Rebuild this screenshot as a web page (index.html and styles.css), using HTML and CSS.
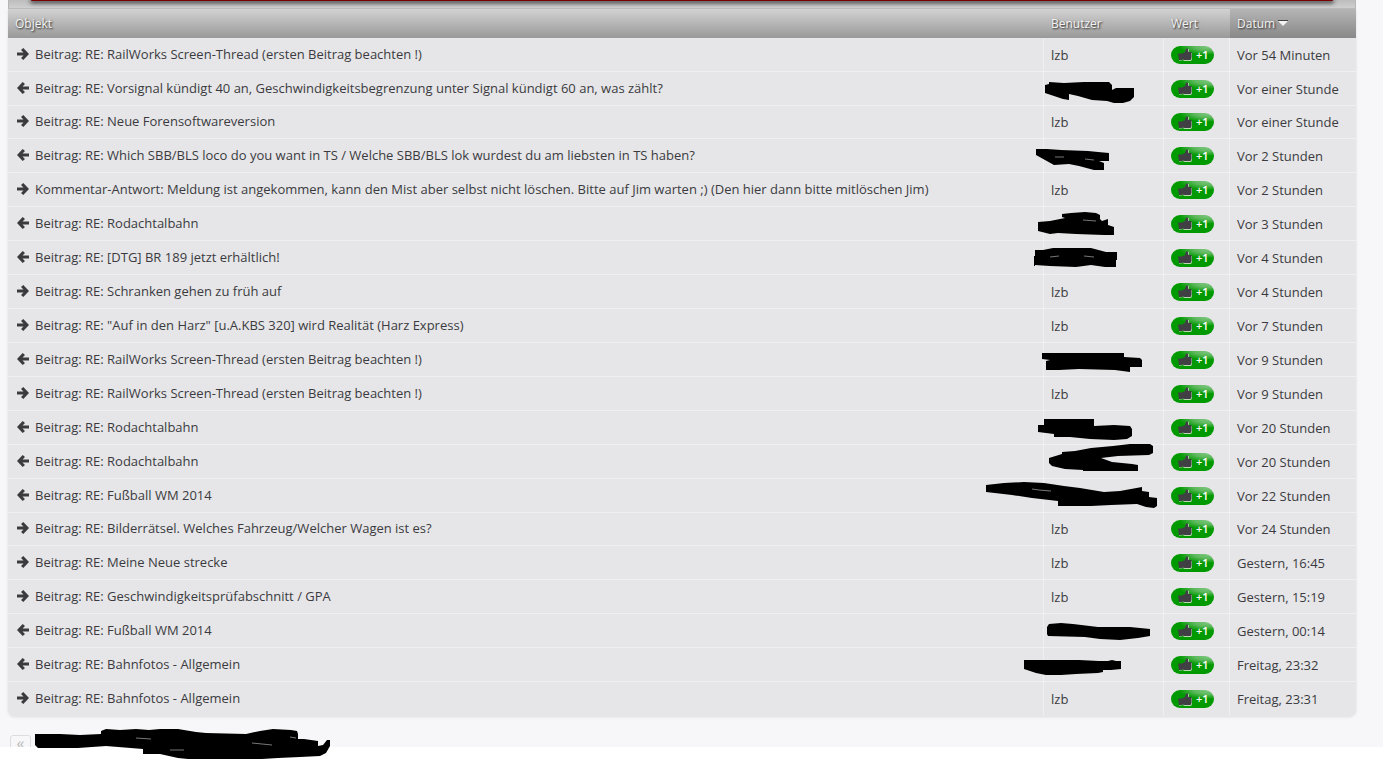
FILE: index.html
```html
<!DOCTYPE html>
<html lang="de">
<head>
<meta charset="utf-8">
<title>Bewertungen</title>
<link rel="stylesheet" href="styles.css">
</head>
<body>
<svg class="defs" aria-hidden="true">
  <symbol id="right" viewBox="0 0 12 12"><path d="M0 4.500h6.500L4 2.100 6.300 0 12 6l-5.700 6L4 9.900l2.500-2.400H0z"/></symbol>
  <symbol id="left" viewBox="0 0 12 12"><path d="M12 4.500H5.500L8 2.100 5.700 0 0 6l5.700 6L8 9.900 5.500 7.500H12z"/></symbol>
  <symbol id="thumb" viewBox="0 0 14 13"><path class="thumb-edge" d="M1 6h3v6.500H1zM5 6l3-2 1-3h2v4h3v6l-1 2H6.500L4.500 12z"/><path class="thumb-fill" d="M0 5.500h4V12H1zM4 5.500L7 4l1-3.500 2 .2.300 3.300H13.500v6l-1 2H6.500L4 11.500z"/></symbol>
</svg>
<main class="content">
  <div class="banner"><div class="banner-bar"></div></div>
  <table class="votes">
    <thead>
      <tr><th class="object"><a href="#">Objekt</a></th><th class="user"><a href="#">Benutzer</a></th><th class="value"><a href="#">Wert</a></th><th class="date sorted"><a href="#">Datum<svg class="sort" viewBox="0 0 10 6"><path class="sort-shade" d="M0 0h10v1H0z"/><path class="sort-fill" d="M0 1h10L5 6z"/></svg></a></th></tr>
    </thead>
    <tbody>
      <tr><td><svg class="arrow"><use href="#right"/></svg><a href="#">Beitrag: RE: RailWorks Screen-Thread (ersten Beitrag beachten !)</a></td><td><a href="#">lzb</a></td><td><span class="badge"><svg class="thumb"><use href="#thumb"/></svg>+1</span></td><td>Vor 54 Minuten</td></tr>
      <tr><td><svg class="arrow"><use href="#left"/></svg><a href="#">Beitrag: RE: Vorsignal kündigt 40 an, Geschwindigkeitsbegrenzung unter Signal kündigt 60 an, was zählt?</a></td><td><svg class="scribble" viewBox="1044 72 120 34"><path d="M1045 85l4-1v-2l15 1 20-1h25l3 3v5l4-2h18v9l-4 4-7 2h-9l-7-2-15-1-14-4-9-2v6l-6-1-18-6z"/></svg></td><td><span class="badge"><svg class="thumb"><use href="#thumb"/></svg>+1</span></td><td>Vor einer Stunde</td></tr>
      <tr><td><svg class="arrow"><use href="#right"/></svg><a href="#">Beitrag: RE: Neue Forensoftwareversion</a></td><td><a href="#">lzb</a></td><td><span class="badge"><svg class="thumb"><use href="#thumb"/></svg>+1</span></td><td>Vor einer Stunde</td></tr>
      <tr><td><svg class="arrow"><use href="#left"/></svg><a href="#">Beitrag: RE: Which SBB/BLS loco do you want in TS / Welche SBB/BLS lok wurdest du am liebsten in TS haben?</a></td><td><svg class="scribble" viewBox="1044 139 120 34"><path d="M1036 149h11l14 1 27 1 10 1 11 1v8h-10l5 2v7h-10l-15-4-10-2-15 1L1045 160l-9-5z"/><path class="gap" d="M1055 157h9M1085 159l9 1"/></svg></td><td><span class="badge"><svg class="thumb"><use href="#thumb"/></svg>+1</span></td><td>Vor 2 Stunden</td></tr>
      <tr><td><svg class="arrow"><use href="#right"/></svg><a href="#">Kommentar-Antwort: Meldung ist angekommen, kann den Mist aber selbst nicht löschen. Bitte auf Jim warten ;) (Den hier dann bitte mitlöschen Jim)</a></td><td><a href="#">lzb</a></td><td><span class="badge"><svg class="thumb"><use href="#thumb"/></svg>+1</span></td><td>Vor 2 Stunden</td></tr>
      <tr><td><svg class="arrow"><use href="#left"/></svg><a href="#">Beitrag: RE: Rodachtalbahn</a></td><td><svg class="scribble" viewBox="1044 207 120 34"><path d="M1038 222l12-1 15-3-3-1v-3l9-1 14-1 11 1 4 2v4l2 2 6-2v6l6 2v8h-10l-28-1-18-1-8 1-12-3z"/><path class="gap" d="M1083 220l13 1"/></svg></td><td><span class="badge"><svg class="thumb"><use href="#thumb"/></svg>+1</span></td><td>Vor 3 Stunden</td></tr>
      <tr><td><svg class="arrow"><use href="#left"/></svg><a href="#">Beitrag: RE: [DTG] BR 189 jetzt erhältlich!</a></td><td><svg class="scribble" viewBox="1044 241 120 34"><path d="M1035 250h8l10-2h38l15 4h11v8h-1v7h-11l-14-2-15 2-26-1-15-1v1h-1v-10h1z"/><path class="gap" d="M1050 257l9-1M1084 256l10 1"/></svg></td><td><span class="badge"><svg class="thumb"><use href="#thumb"/></svg>+1</span></td><td>Vor 4 Stunden</td></tr>
      <tr><td><svg class="arrow"><use href="#right"/></svg><a href="#">Beitrag: RE: Schranken gehen zu früh auf</a></td><td><a href="#">lzb</a></td><td><span class="badge"><svg class="thumb"><use href="#thumb"/></svg>+1</span></td><td>Vor 4 Stunden</td></tr>
      <tr><td><svg class="arrow"><use href="#right"/></svg><a href="#">Beitrag: RE: "Auf in den Harz" [u.A.KBS 320] wird Realität (Harz Express)</a></td><td><a href="#">lzb</a></td><td><span class="badge"><svg class="thumb"><use href="#thumb"/></svg>+1</span></td><td>Vor 7 Stunden</td></tr>
      <tr><td><svg class="arrow"><use href="#left"/></svg><a href="#">Beitrag: RE: RailWorks Screen-Thread (ersten Beitrag beachten !)</a></td><td><svg class="scribble" viewBox="1044 343 120 34"><path d="M1042 353h82v4l16 1 2 2v7h-12v5l-15-2-36-1-20 1h-13v-9l4-1-8-1z"/></svg></td><td><span class="badge"><svg class="thumb"><use href="#thumb"/></svg>+1</span></td><td>Vor 9 Stunden</td></tr>
      <tr><td><svg class="arrow"><use href="#right"/></svg><a href="#">Beitrag: RE: RailWorks Screen-Thread (ersten Beitrag beachten !)</a></td><td><a href="#">lzb</a></td><td><span class="badge"><svg class="thumb"><use href="#thumb"/></svg>+1</span></td><td>Vor 9 Stunden</td></tr>
      <tr><td><svg class="arrow"><use href="#left"/></svg><a href="#">Beitrag: RE: Rodachtalbahn</a></td><td><svg class="scribble" viewBox="1044 411 120 34"><path d="M1038 425h6v-6h50v7l20-1 16 1 2 3v7l-5 3-13 1-24-1-20-2h-16v-3l-16-2z"/></svg></td><td><span class="badge"><svg class="thumb"><use href="#thumb"/></svg>+1</span></td><td>Vor 20 Stunden</td></tr>
      <tr><td><svg class="arrow"><use href="#left"/></svg><a href="#">Beitrag: RE: Rodachtalbahn</a></td><td><svg class="scribble" viewBox="1044 445 120 34"><path d="M1049 458l13-4v-2l13-1 16-3 22-2 17-2h20l3 2v7l-4 2-31 1-17 2 11 4 20 2 6 1v6h-55v-1l-18-1-13-3-3-3z"/></svg></td><td><span class="badge"><svg class="thumb"><use href="#thumb"/></svg>+1</span></td><td>Vor 20 Stunden</td></tr>
      <tr><td><svg class="arrow"><use href="#left"/></svg><a href="#">Beitrag: RE: Fußball WM 2014</a></td><td><svg class="scribble" viewBox="1044 479 120 34"><path d="M986 485l18-2 20-1 20 1 20 3 16 2 24 4 16-1 22-4v4l7 1v5l8 1v8l-3 2-8-1-9-3-26 1-20 1h-33v-5l-26-3-20-3-26-3z"/><path class="gap" d="M1032 489l7 1 12 1"/></svg></td><td><span class="badge"><svg class="thumb"><use href="#thumb"/></svg>+1</span></td><td>Vor 22 Stunden</td></tr>
      <tr><td><svg class="arrow"><use href="#right"/></svg><a href="#">Beitrag: RE: Bilderrätsel. Welches Fahrzeug/Welcher Wagen ist es?</a></td><td><a href="#">lzb</a></td><td><span class="badge"><svg class="thumb"><use href="#thumb"/></svg>+1</span></td><td>Vor 24 Stunden</td></tr>
      <tr><td><svg class="arrow"><use href="#right"/></svg><a href="#">Beitrag: RE: Meine Neue strecke</a></td><td><a href="#">lzb</a></td><td><span class="badge"><svg class="thumb"><use href="#thumb"/></svg>+1</span></td><td>Gestern, 16:45</td></tr>
      <tr><td><svg class="arrow"><use href="#right"/></svg><a href="#">Beitrag: RE: Geschwindigkeitsprüfabschnitt / GPA</a></td><td><a href="#">lzb</a></td><td><span class="badge"><svg class="thumb"><use href="#thumb"/></svg>+1</span></td><td>Gestern, 15:19</td></tr>
      <tr><td><svg class="arrow"><use href="#left"/></svg><a href="#">Beitrag: RE: Fußball WM 2014</a></td><td><svg class="scribble" viewBox="1044 614 120 34"><path d="M1047 627l2-3 12-1 12 1 25 3h32l20 2v7l-12 2-18 2-20-1-15-2-37-1-1-2z"/></svg></td><td><span class="badge"><svg class="thumb"><use href="#thumb"/></svg>+1</span></td><td>Gestern, 00:14</td></tr>
      <tr><td><svg class="arrow"><use href="#left"/></svg><a href="#">Beitrag: RE: Bahnfotos - Allgemein</a></td><td><svg class="scribble" viewBox="1044 648 120 34"><path d="M1024 660h55l20 1h9l4-1 4 1h5v8l-10 1h-8v2l-5 1-22 1-15 1h-15l-10-2-12-4z"/></svg></td><td><span class="badge"><svg class="thumb"><use href="#thumb"/></svg>+1</span></td><td>Freitag, 23:32</td></tr>
      <tr><td><svg class="arrow"><use href="#right"/></svg><a href="#">Beitrag: RE: Bahnfotos - Allgemein</a></td><td><a href="#">lzb</a></td><td><span class="badge"><svg class="thumb"><use href="#thumb"/></svg>+1</span></td><td>Freitag, 23:31</td></tr>
    </tbody>
  </table>
  <nav class="pager">
    <div class="pager-clip"><button class="previous" type="button" disabled>«</button></div>
    <svg class="pager-scribble" viewBox="35 729 296 30"><path d="M35 734h25l20 1 21-1v-3l5-2 14 1 16-1 13 1 11-1h18l18 3 10 1 40 1 14-3 13-2 18 1 6 1 1 3v5h6l14 2v5l5-1 4-5h3v6l-4 7-6 3-20 1-22 1-32 2h-48l-20-2-18-4h-17v-5l-37-3-28 2H38L35 745z"/><path class="gap" d="M136 738l15 1M170 750h14M252 743l20 2M290 737l6 1"/></svg>
  </nav>
</main>
</body>
</html>
```
FILE: styles.css
```css
* { box-sizing: border-box; }
body {
  margin: 0;
  min-height: 100vh;
  background: #fff;
  color: #3b3b3f;
  font: 13px/18px "Trebuchet MS", "Open Sans", sans-serif;
}
a { color: inherit; text-decoration: none; }
.defs { position: absolute; width: 0; height: 0; }
.content { padding: 0 27px 0 8px; background: #f7f7f9; }
.banner {
  height: 9px;
  padding: 0 22px;
  overflow: hidden;
  background: linear-gradient(#bdbdbd, #cfcfcf);
  border: 1px solid #b5b5b5;
  border-top: 0;
}
.banner-bar {
  height: 1px;
  background: #780000;
  border-radius: 0 0 4px 4px;
  box-shadow: 0 1px 4px 1px #222;
}
.votes {
  width: 100%;
  table-layout: fixed;
  border-collapse: separate;
  border-spacing: 0;
  background: #e6e6e8;
  border-radius: 0 0 7px 7px;
  box-shadow: 0 1px 3px #dcdcde;
}
.votes th {
  height: 29px;
  padding: 0 7px;
  text-align: left;
  font-size: 12px;
  font-weight: 500;
  color: #f2f2f2;
  text-shadow: 1px 1px 2px #222;
  background: linear-gradient(#d2d2d2, #999);
}
.votes .sorted { background: linear-gradient(#b5b5b5, #888); }
.user { width: 120px; }
.value { width: 66px; }
.date { width: 126px; }
.sort { width: 10px; height: 6px; margin-left: 3px; vertical-align: 2px; }
.sort-fill { fill: #f2f2f2; }
.sort-shade { fill: #444; }
.votes td {
  position: relative;
  height: 34px;
  padding: 0 7px;
  border-right: 1px solid #f0f0f2;
  border-bottom: 1px solid #f0f0f2;
  white-space: nowrap;
}
.votes tr:nth-child(12n+3) td { height: 33px; }
.votes td:first-child { padding: 0 9px 2px; }
.votes td:last-child { border-right: 0; }
.votes tr:last-child td { border-bottom: 0; }
.arrow {
  width: 12px;
  height: 12px;
  margin-right: 6px;
  vertical-align: -1px;
  fill: #3b3b3f;
}
.badge {
  display: flex;
  align-items: center;
  gap: 4px;
  width: 43px;
  height: 18px;
  padding-left: 7px;
  border-radius: 9px;
  color: #fff;
  font-size: 11px;
  font-weight: 600;
  background: radial-gradient(ellipse 30px 9px at 88% 0, #82c982 0, #5cb85c 50%, #090 100%) #090;
}
.thumb { width: 14px; height: 13px; flex: none; }
.thumb-fill { fill: #404044; }
.thumb-edge { fill: #b9d9b0; }
.scribble {
  position: absolute;
  top: 0;
  left: 0;
  width: 120px;
  height: 34px;
  overflow: visible;
  z-index: 1;
}
.gap { fill: none; stroke: #777; }
.pager { position: relative; padding-top: 19px; }
.pager-clip { height: 12px; padding-left: 2px; overflow: hidden; }
.previous {
  display: block;
  width: 21px;
  height: 21px;
  padding: 0 0 4px;
  border: 1px solid #ddd;
  border-radius: 3px;
  background: #f7f7f9;
  color: #bbb;
  font: inherit;
  font-size: 16px;
  line-height: 15px;
}
.pager-scribble {
  position: absolute;
  top: 13px;
  left: 27px;
  width: 296px;
  height: 30px;
}
```
